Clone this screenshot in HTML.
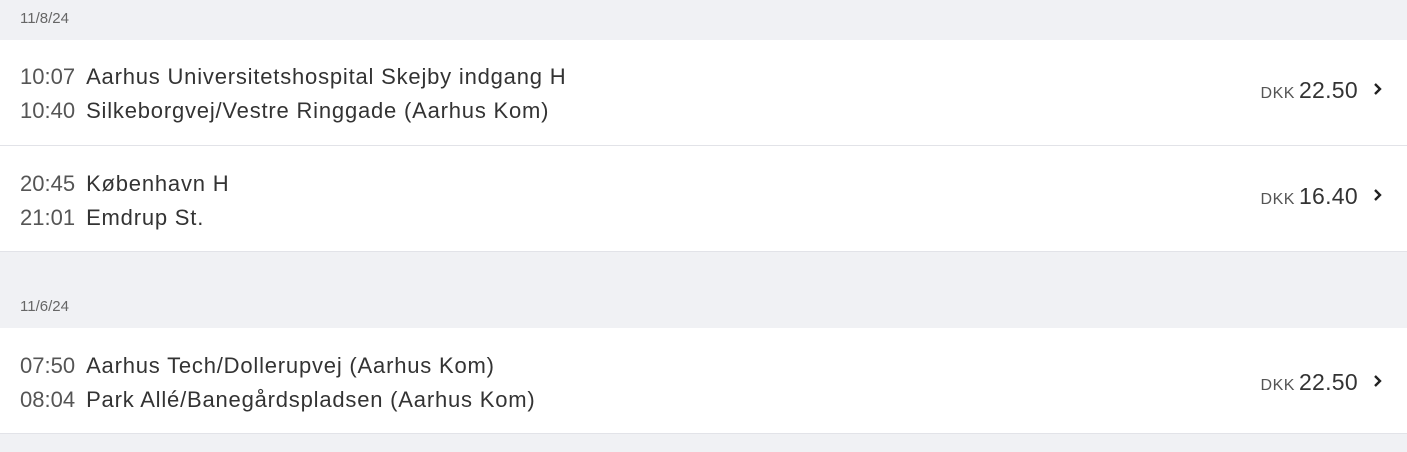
<!DOCTYPE html><html><head><style>
body{margin:0;width:1407px;height:452px;background:#f0f1f4;font-family:"Liberation Sans",sans-serif;overflow:hidden;position:relative}
.d{position:absolute;left:20px;font-size:15px;color:#666}
.r{position:absolute;left:0;width:1407px;height:105px;background:#fff;border-bottom:1px solid #e2e3e8}
.l{position:absolute;left:20px;font-size:22px;color:#333;white-space:nowrap;letter-spacing:0.8px}
.l span{color:#555;margin-right:11px;letter-spacing:0}
.p{position:absolute;right:49px;top:37px;font-size:23px;color:#333;letter-spacing:0.3px}
.p small{font-size:16px;color:#555;margin-right:4px;letter-spacing:0.5px}
.c{position:absolute;right:22px;top:42px;width:14px;height:14px}
</style></head><body>
<div class="d" style="top:10px">11/8/24</div>
<div class="r" style="top:40px">
<div class="l" style="top:24px"><span>10:07</span>Aarhus Universitetshospital Skejby indgang H</div>
<div class="l" style="top:58px"><span>10:40</span>Silkeborgvej/Vestre Ringgade (Aarhus Kom)</div>
<div class="p"><small>DKK</small>22.50</div>
<svg class="c" viewBox="0 0 14 14"><path d="M4 2l5 5-5 5" fill="none" stroke="#222" stroke-width="2.4"/></svg>
</div>
<div class="r" style="top:146px">
<div class="l" style="top:25px"><span>20:45</span>København H</div>
<div class="l" style="top:59px"><span>21:01</span>Emdrup St.</div>
<div class="p"><small>DKK</small>16.40</div>
<svg class="c" viewBox="0 0 14 14"><path d="M4 2l5 5-5 5" fill="none" stroke="#222" stroke-width="2.4"/></svg>
</div>
<div class="d" style="top:298px">11/6/24</div>
<div class="r" style="top:328px">
<div class="l" style="top:25px"><span>07:50</span>Aarhus Tech/Dollerupvej (Aarhus Kom)</div>
<div class="l" style="top:59px"><span>08:04</span>Park Allé/Banegårdspladsen (Aarhus Kom)</div>
<div class="p" style="top:41px"><small>DKK</small>22.50</div>
<svg class="c" style="top:46px" viewBox="0 0 14 14"><path d="M4 2l5 5-5 5" fill="none" stroke="#222" stroke-width="2.4"/></svg>
</div>
</body></html>
